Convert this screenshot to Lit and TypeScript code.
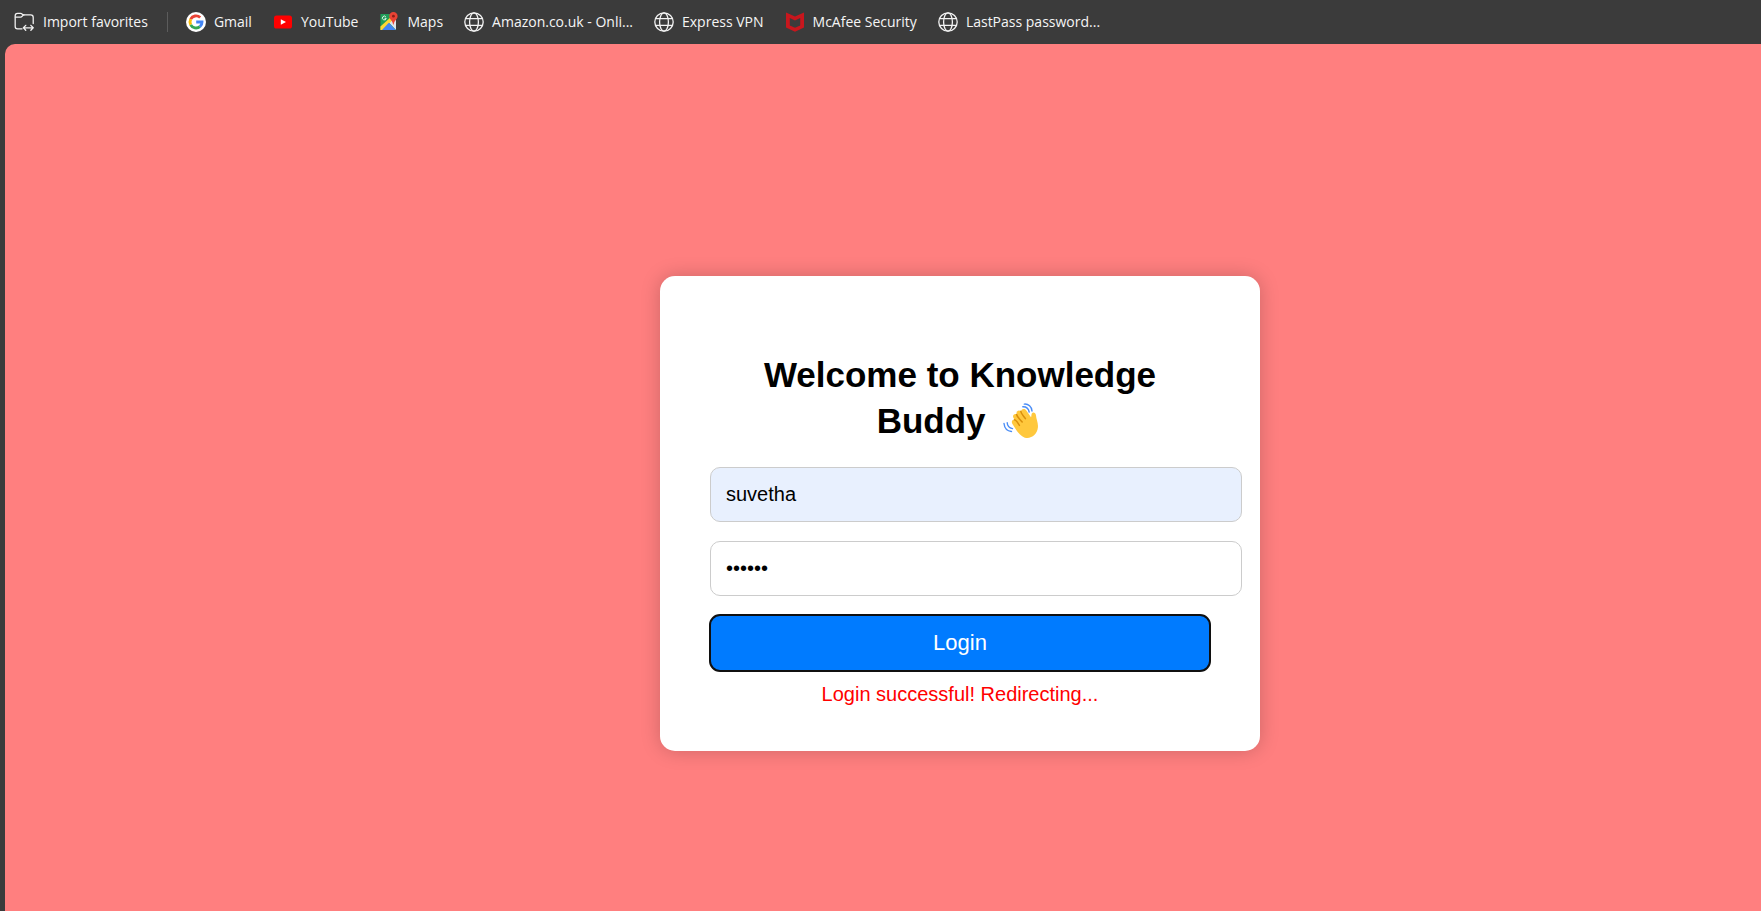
import { LitElement, html, css, svg } from "lit";
import { customElement, state } from "lit/decorators.js";

const folder = svg`<g fill="none" stroke="#f2f2f2" stroke-width="1.3" stroke-linecap="round" stroke-linejoin="round"><path d="M8.2 17H3.6A2.4 2.4 0 0 1 1.2 14.6V3.6A2.4 2.4 0 0 1 3.6 1.2H6.8C8.2 1.2 8.8 2.8 10.2 2.8H17A2.6 2.6 0 0 1 19.6 5.4V11.6"/><path d="M1.4 5H6.8C8.3 5 8.6 2.9 10.2 2.8"/><path d="M9.8 15.9H19.4M12 13.4L9.6 15.9L12 18.4M17.2 13.4L19.6 15.9L17.2 18.4"/></g>`;
const google = svg`<circle cx="10" cy="10" r="10" fill="#fff"/><g fill="none" stroke-width="2.9"><path d="M14.2 5.5A6 6 0 0 0 4.7 7.2" stroke="#ea4335"/><path d="M4.7 7.2A6 6 0 0 0 4.7 12.8" stroke="#fbbc05"/><path d="M4.7 12.8A6 6 0 0 0 13.9 14.6" stroke="#34a853"/><path d="M13.9 14.6A6 6 0 0 0 16 10H10.2" stroke="#4285f4"/></g>`;
const youtube = svg`<rect x="1" y="3.4" width="18" height="13.2" rx="2.6" fill="#f00"/><path d="M7.8 7.2L13 10L7.8 12.8Z" fill="#fff"/>`;
const maps = svg`<path d="M1.4 2H17V18H1.4Z" fill="#1f9d58"/><path d="M9.6 10.2L17 6V18Z" fill="#dfe3e8"/><path d="M1.4 14.6L11.4 5.4L13.4 8.2L3.6 18H1.4Z" fill="#fdd835"/><path d="M3 18L9.8 10.8L16.8 18Z" fill="#4285f4"/><path d="M6.8 4.8A1.9 1.9 0 1 0 7.2 6.3H5.6" fill="none" stroke="#e8f5ec"/><path d="M14.4 0A4.2 4.2 0 0 1 18.6 4.2C18.6 7.2 15.3 8.2 14.7 12.4H14.1C13.5 8.2 10.2 7.2 10.2 4.2A4.2 4.2 0 0 1 14.4 0Z" fill="#ea4335"/><circle cx="14.4" cy="4.2" r="1.4" fill="#8c1f17"/>`;
const globe = svg`<g fill="none" stroke="#f2f2f2" stroke-width="1.3"><circle cx="10" cy="10" r="9.2"/><ellipse cx="10" cy="10" rx="4.4" ry="9.2"/><path d="M1.7 6.7H18.3M1.7 13.3H18.3"/></g>`;
const mcafee = svg`<path d="M1 .6L10 4.6L19 .6V15.6L10 19.8L1 15.6ZM4.8 6V13.4L10 15.8L15.2 13.4V6L10 8.6Z" fill="#c8161d" fill-rule="evenodd"/>`;

const bookmarks = [
  { label: "Gmail", icon: google },
  { label: "YouTube", icon: youtube },
  { label: "Maps", icon: maps },
  { label: "Amazon.co.uk - Onli...", icon: globe },
  { label: "Express VPN", icon: globe },
  { label: "McAfee Security", icon: mcafee },
  { label: "LastPass password...", icon: globe },
];

@customElement("bookmarks-bar")
class BookmarksBar extends LitElement {
  static styles = css`
    :host { display: block; }
    .bar { display: flex; align-items: center; height: 44px; padding-left: 14px; overflow: hidden; font: 14px/20px "Open Sans", "Noto Sans", sans-serif; }
    .link { display: flex; align-items: center; gap: 8px; margin-right: 21px; color: #f5f5f5; text-decoration: none; white-space: nowrap; }
    .import { gap: 9px; margin-right: 19px; }
    .icon { display: block; width: 20px; height: 20px; flex: none; }
    .divider { width: 1px; height: 20px; margin-right: 18px; background: #5c5c5c; flex: none; }
  `;
  render() {
    return html`<nav class="bar" aria-label="Favorites">
      <a class="link import" href="#"><svg class="icon" viewBox="0 0 20.4 20" aria-hidden="true">${folder}</svg><span>Import favorites</span></a>
      <span class="divider"></span>
      ${bookmarks.map((b) => html`<a class="link" href="#"><svg class="icon" viewBox="0 0 20 20" aria-hidden="true">${b.icon}</svg><span>${b.label}</span></a>`)}
    </nav>`;
  }
}

@customElement("login-card")
class LoginCard extends LitElement {
  @state() private message = "Login successful! Redirecting...";

  static styles = css`
    :host { display: block; width: 600px; max-width: 100%; }
    .card { box-sizing: border-box; padding: 46px 50px 45px; border-radius: 15px; background: #fff; box-shadow: 0 0 20px rgba(0, 0, 0, 0.2); font-family: Arial, "Liberation Sans", sans-serif; text-align: center; }
    .title { margin: 30px 0 23px; font-size: 35px; line-height: 46px; font-weight: 700; color: #000; }
    .wave { width: 36px; height: 36px; margin: 0 4px 0 8px; vertical-align: -6px; }
    .form { display: block; }
    .field { display: block; box-sizing: content-box; width: 100%; height: 23px; margin: 0 0 19px; padding: 15px; border: 1px solid #ccc; border-radius: 10px; outline: none; background: #fff; color: #000; font: 20px/23px Arial, "Liberation Sans", sans-serif; }
    .filled { background: #e8f0fe; }
    .submit { display: block; width: 100%; padding: 15px; border: 0; border-radius: 10px; outline: 2px solid #101010; outline-offset: -1px; background: #007bff; color: #fff; font: 22px/26px Arial, "Liberation Sans", sans-serif; cursor: pointer; }
    .message { margin: 12px 0 0; color: #f00; font-size: 20px; line-height: 23px; }
  `;

  render() {
    return html`<section class="card">
      <h2 class="title">Welcome to Knowledge Buddy
        <svg class="wave" viewBox="0 0 36 36" role="img" aria-label="waving hand">
          <path d="M9.6 21.2C7.8 18.4 9.4 16.4 11.6 16.8L10.4 14.8C9 12 11.6 10 13.9 11.4C12.6 8.2 15.6 6.2 18 8.2C18.6 5.6 21.6 5.2 23.3 7.4L28 14.2C28.6 13.2 28.2 11.6 28.8 10.4C30 8.6 32.8 9.6 33 12.4C33.2 16 35.4 19.6 34.9 24.6C34.2 31 29.2 35.4 23.4 34.9C19.2 34.4 16.4 31 13.4 27.2Z" fill="#ffc83d"/>
          <g fill="none" stroke="#d98f0c" stroke-width="1.5" stroke-linecap="round" stroke-linejoin="round"><path d="M11.4 16.8C13.2 17 14.8 19.8 16.4 22.4M13.6 11.4C13.8 13.8 16.8 16 19.2 19M17.8 8.2C17.8 10.6 20.4 12.6 22.4 15.6"/></g>
          <g fill="none" stroke="#4a8df6" stroke-width="1.4" stroke-linecap="round"><path d="M21.3 1.1C25.3 .7 28.8 3.7 29 8M19.8 3.8C23.2 3.6 25.5 5.8 26.2 9M1 20.5C1.5 25 4.3 28.1 8.5 28.5M4.2 19.8C4.4 22.8 6.3 25 9.5 25.6"/></g>
        </svg>
      </h2>
      <form class="form" @submit=${(e: Event) => { e.preventDefault(); this.message = "Login successful! Redirecting..."; }}>
        <input class="field filled" type="text" aria-label="Username" autocomplete="username" .value=${"suvetha"} />
        <input class="field" type="password" aria-label="Password" autocomplete="current-password" .value=${"secret"} />
        <button class="submit" type="submit">Login</button>
      </form>
      <p class="message" role="status">${this.message}</p>
    </section>`;
  }
}

@customElement("app-root")
class AppRoot extends LitElement {
  static styles = css`
    :host { display: flex; flex-direction: column; min-height: 100vh; background: #3b3b3b; }
    .page { flex: 1; display: flex; align-items: center; justify-content: center; box-sizing: border-box; margin-left: 5px; padding: 72px 0 0 154px; border-top-left-radius: 10px; background: #ff7f7f; }
  `;
  render() {
    return html`<bookmarks-bar></bookmarks-bar><main class="page"><login-card></login-card></main>`;
  }
}
